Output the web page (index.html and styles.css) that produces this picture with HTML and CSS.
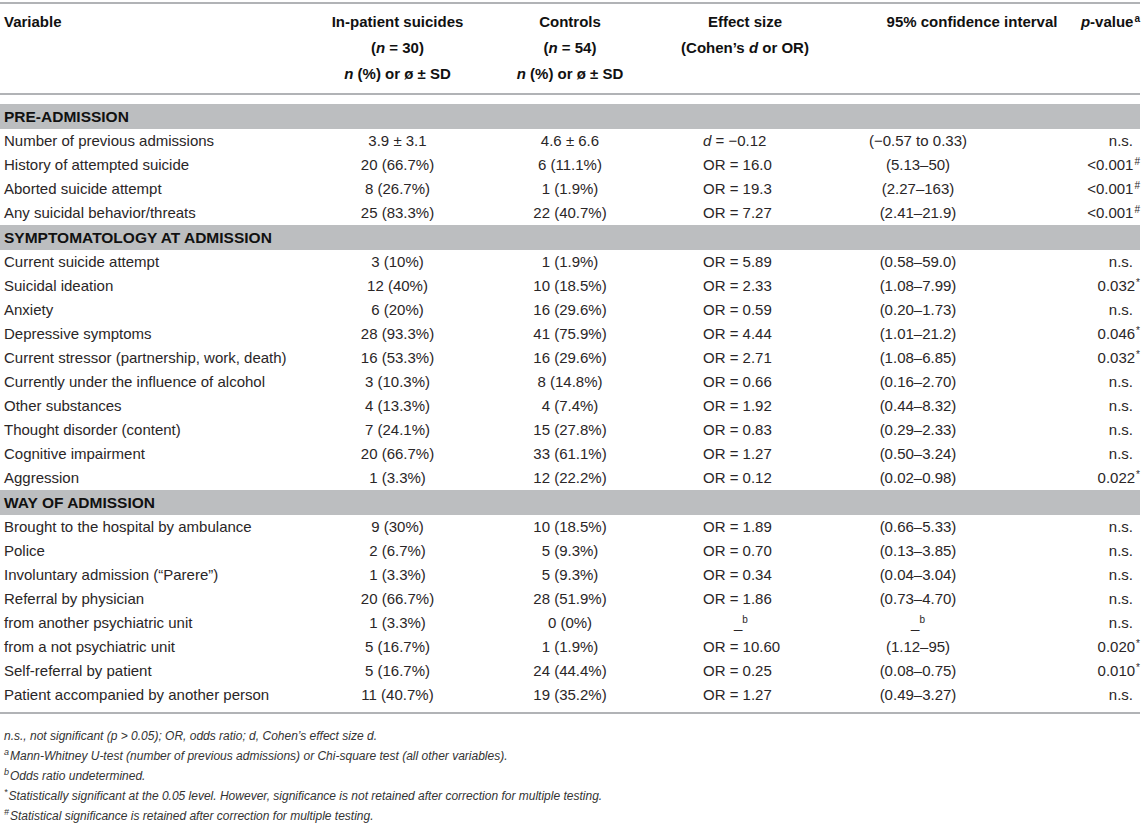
FILE: index.html
```html
<!DOCTYPE html>
<html lang="en">
<head>
<meta charset="utf-8">
<title>Table</title>
<link rel="stylesheet" href="styles.css">
</head>
<body>
<table class="tbl">
  <colgroup>
    <col class="c-var">
    <col class="c-pat">
    <col class="c-ctl">
    <col class="c-eff">
    <col class="c-ci">
    <col class="c-p">
  </colgroup>
  <thead>
    <tr>
      <th class="h-var">Variable</th>
      <th class="h-mid"><div>In-patient suicides</div><div>(<i>n</i> = 30)</div><div><i>n</i> (%) or ø ± SD</div></th>
      <th class="h-mid"><div>Controls</div><div>(<i>n</i> = 54)</div><div><i>n</i> (%) or ø ± SD</div></th>
      <th class="h-mid"><div>Effect size</div><div>(Cohen’s <i>d</i> or OR)</div></th>
      <th class="h-ci">95% confidence interval</th>
      <th class="h-p"><i>p</i>-value<sup>a</sup></th>
    </tr>
  </thead>
  <tbody>
    <tr class="gap"><td colspan="6"></td></tr>
    <tr class="band"><td colspan="6">PRE-ADMISSION</td></tr>
    <tr><td>Number of previous admissions</td><td>3.9 ± 3.1</td><td>4.6 ± 6.6</td><td><i>d</i> = −0.12</td><td>(−0.57 to 0.33)</td><td>n.s.</td></tr>
    <tr><td>History of attempted suicide</td><td>20 (66.7%)</td><td>6 (11.1%)</td><td>OR = 16.0</td><td>(5.13–50)</td><td>&lt;0.001<sup>#</sup></td></tr>
    <tr><td>Aborted suicide attempt</td><td>8 (26.7%)</td><td>1 (1.9%)</td><td>OR = 19.3</td><td>(2.27–163)</td><td>&lt;0.001<sup>#</sup></td></tr>
    <tr><td>Any suicidal behavior/threats</td><td>25 (83.3%)</td><td>22 (40.7%)</td><td>OR = 7.27</td><td>(2.41–21.9)</td><td>&lt;0.001<sup>#</sup></td></tr>
    <tr class="band"><td colspan="6">SYMPTOMATOLOGY AT ADMISSION</td></tr>
    <tr><td>Current suicide attempt</td><td>3 (10%)</td><td>1 (1.9%)</td><td>OR = 5.89</td><td>(0.58–59.0)</td><td>n.s.</td></tr>
    <tr><td>Suicidal ideation</td><td>12 (40%)</td><td>10 (18.5%)</td><td>OR = 2.33</td><td>(1.08–7.99)</td><td>0.032<sup>*</sup></td></tr>
    <tr><td>Anxiety</td><td>6 (20%)</td><td>16 (29.6%)</td><td>OR = 0.59</td><td>(0.20–1.73)</td><td>n.s.</td></tr>
    <tr><td>Depressive symptoms</td><td>28 (93.3%)</td><td>41 (75.9%)</td><td>OR = 4.44</td><td>(1.01–21.2)</td><td>0.046<sup>*</sup></td></tr>
    <tr><td>Current stressor (partnership, work, death)</td><td>16 (53.3%)</td><td>16 (29.6%)</td><td>OR = 2.71</td><td>(1.08–6.85)</td><td>0.032<sup>*</sup></td></tr>
    <tr><td>Currently under the influence of alcohol</td><td>3 (10.3%)</td><td>8 (14.8%)</td><td>OR = 0.66</td><td>(0.16–2.70)</td><td>n.s.</td></tr>
    <tr><td>Other substances</td><td>4 (13.3%)</td><td>4 (7.4%)</td><td>OR = 1.92</td><td>(0.44–8.32)</td><td>n.s.</td></tr>
    <tr><td>Thought disorder (content)</td><td>7 (24.1%)</td><td>15 (27.8%)</td><td>OR = 0.83</td><td>(0.29–2.33)</td><td>n.s.</td></tr>
    <tr><td>Cognitive impairment</td><td>20 (66.7%)</td><td>33 (61.1%)</td><td>OR = 1.27</td><td>(0.50–3.24)</td><td>n.s.</td></tr>
    <tr><td>Aggression</td><td>1 (3.3%)</td><td>12 (22.2%)</td><td>OR = 0.12</td><td>(0.02–0.98)</td><td>0.022<sup>*</sup></td></tr>
    <tr class="band"><td colspan="6">WAY OF ADMISSION</td></tr>
    <tr><td>Brought to the hospital by ambulance</td><td>9 (30%)</td><td>10 (18.5%)</td><td>OR = 1.89</td><td>(0.66–5.33)</td><td>n.s.</td></tr>
    <tr><td>Police</td><td>2 (6.7%)</td><td>5 (9.3%)</td><td>OR = 0.70</td><td>(0.13–3.85)</td><td>n.s.</td></tr>
    <tr><td>Involuntary admission (“Parere”)</td><td>1 (3.3%)</td><td>5 (9.3%)</td><td>OR = 0.34</td><td>(0.04–3.04)</td><td>n.s.</td></tr>
    <tr><td>Referral by physician</td><td>20 (66.7%)</td><td>28 (51.9%)</td><td>OR = 1.86</td><td>(0.73–4.70)</td><td>n.s.</td></tr>
    <tr><td>from another psychiatric unit</td><td>1 (3.3%)</td><td>0 (0%)</td><td class="undet">_<sup>b</sup></td><td>_<sup>b</sup></td><td>n.s.</td></tr>
    <tr><td>from a not psychiatric unit</td><td>5 (16.7%)</td><td>1 (1.9%)</td><td>OR = 10.60</td><td>(1.12–95)</td><td>0.020<sup>*</sup></td></tr>
    <tr><td>Self-referral by patient</td><td>5 (16.7%)</td><td>24 (44.4%)</td><td>OR = 0.25</td><td>(0.08–0.75)</td><td>0.010<sup>*</sup></td></tr>
    <tr class="last"><td>Patient accompanied by another person</td><td>11 (40.7%)</td><td>19 (35.2%)</td><td>OR = 1.27</td><td>(0.49–3.27)</td><td>n.s.</td></tr>
  </tbody>
</table>
<div class="notes">
  <p>n.s., not significant (p &gt; 0.05); OR, odds ratio; d, Cohen’s effect size d.</p>
  <p><sup>a</sup>Mann-Whitney U-test (number of previous admissions) or Chi-square test (all other variables).</p>
  <p><sup>b</sup>Odds ratio undetermined.</p>
  <p><sup>*</sup>Statistically significant at the 0.05 level. However, significance is not retained after correction for multiple testing.</p>
  <p><sup>#</sup>Statistical significance is retained after correction for multiple testing.</p>
</div>
</body>
</html>
```

FILE: styles.css
```css
html, body {
  margin: 0;
  padding: 0;
  background: #ffffff;
}

body {
  font-family: "Liberation Sans", Arial, sans-serif;
  color: #2a2627;
}

.tbl {
  width: 1140px;
  table-layout: fixed;
  border-collapse: separate;
  border-spacing: 0;
  margin-top: 2px;
  font-size: 15px;
}

.c-var { width: 305px; }
.c-pat { width: 185px; }
.c-ctl { width: 160px; }
.c-eff { width: 190px; }
.c-ci  { width: 235px; }
.c-p   { width: 65px; }

.tbl thead th {
  border-top: 2px solid #b1b3b6;
  border-bottom: 2px solid #b1b3b6;
  padding: 5px 0 6px;
  vertical-align: top;
  font-weight: bold;
  color: #111111;
  line-height: 26px;
  white-space: nowrap;
}

.tbl thead .h-var {
  text-align: left;
  padding-left: 4px;
}

.tbl thead .h-mid {
  text-align: center;
}

.tbl thead .h-ci {
  text-align: center;
  padding-left: 29px;
}

.tbl thead .h-p {
  text-align: right;
  padding-right: 7px;
}

.tbl sup {
  font-size: 10px;
  line-height: 0;
  vertical-align: 5px;
}

.tbl td:nth-child(6) sup,
.tbl .h-p sup {
  margin-right: -7px;
  margin-left: 1px;
}

.tbl tbody td {
  height: 24px;
  padding: 0;
  line-height: 24px;
  white-space: nowrap;
  text-align: center;
}

.tbl tbody td:first-child {
  text-align: left;
  padding-left: 4px;
}

.tbl tbody td:nth-child(4) {
  text-align: left;
  padding-left: 53px;
}

.tbl tbody td.undet {
  text-align: left;
  padding-left: 84px;
}

.tbl tbody td:nth-child(5) {
  padding-right: 79px;
}

.tbl tbody td:nth-child(6) {
  text-align: right;
  padding-right: 7px;
}

.tbl tbody tr.gap td {
  height: 9px;
  line-height: 0;
  padding: 0;
}

.tbl tbody tr.band td {
  background: #bcbec0;
  height: 25px;
  line-height: 25px;
  font-weight: bold;
  color: #111111;
  text-align: left;
  padding-left: 4px;
  font-size: 15.5px;
}

.tbl tbody tr.last td {
  height: 29px;
  line-height: 24px;
  vertical-align: top;
  border-bottom: 2px solid #b1b3b6;
}

.notes {
  padding: 12px 0 0 4px;
  font-size: 12px;
  font-style: italic;
  color: #333333;
}

.notes p {
  margin: 0;
  line-height: 20px;
}

.notes sup {
  font-size: 9px;
  line-height: 0;
  vertical-align: 5px;
  margin-right: 1px;
}
```
